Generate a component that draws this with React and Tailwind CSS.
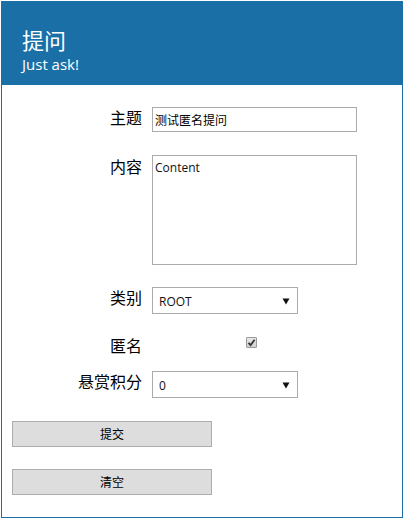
const cjk = { fontFamily: '"Noto Sans CJK SC", "Open Sans", sans-serif' };
const latin = { fontFamily: '"Open Sans", "Noto Sans CJK SC", sans-serif' };

function Label({ children, className = "" }) {
  return (
    <div className={"w-[140px] shrink-0 text-right text-[16px] leading-[18px] text-black " + className} style={cjk}>
      {children}
    </div>
  );
}

function Caret() {
  return (
    <svg width="8" height="8" viewBox="0 0 8 8" className="shrink-0">
      <path d="M0.5 1.5 L7.5 1.5 L4 7.5 Z" fill="#111" />
    </svg>
  );
}

function FakeSelect({ value }) {
  return (
    <div className="flex h-[27px] w-[146px] items-center justify-between border border-[#ababab] bg-white pl-[6px] pr-[7px]">
      <span className="pt-[2px] text-[12px] leading-[14px] text-[#111]" style={latin}>{value}</span>
      <Caret />
    </div>
  );
}

function App() {
  return (
    <div className="ml-px mt-px h-[517px] w-[402px] border border-[#1a70a6] bg-white">
      {/* Header */}
      <div className="h-[83px] bg-[#1a70a6] pl-[20px] pt-[24px] text-white">
        <div className="text-[22px] leading-[26px]" style={cjk}>提问</div>
        <div className="mt-[3px] text-[15px] leading-[18px]" style={latin}>Just ask!</div>
      </div>

      {/* Form */}
      <div className="pt-[22px]">
        <div className="flex items-start gap-[10px]">
          <Label className="pt-[1px]">主题</Label>
          <div className="flex h-[25px] w-[205px] items-center border border-[#ababab] px-[2px] text-[12px] text-black" style={cjk}>
            测试匿名提问
          </div>
        </div>

        <div className="mt-[23px] flex items-start gap-[10px]">
          <Label className="pt-[2px]">内容</Label>
          <div className="h-[110px] w-[205px] border border-[#ababab] px-[2px] pt-[5px] text-[12px] leading-[14px] text-[#111]" style={latin}>
            Content
          </div>
        </div>

        <div className="mt-[22px] flex items-start gap-[10px]">
          <Label className="pt-[1px]">类别</Label>
          <FakeSelect value="ROOT" />
        </div>

        <div className="mt-[22px] flex items-start gap-[10px]">
          <Label>匿名</Label>
          <div className="ml-[94px] mt-[1px] flex h-[11px] w-[11px] items-center justify-center rounded-[1px] border border-[#9a9a9a] bg-gradient-to-b from-[#e8e8e8] to-[#cfcfcf]">
            <svg width="9" height="9" viewBox="0 0 9 9">
              <path d="M1.5 4.8 L3.6 7 L7.6 1.8" fill="none" stroke="#333" strokeWidth="1.8" />
            </svg>
          </div>
        </div>

        <div className="mt-[17px] flex items-start gap-[10px]">
          <Label className="pt-[1px]">悬赏积分</Label>
          <FakeSelect value="0" />
        </div>

        <div className="ml-[10px] mt-[23px] flex flex-col gap-[22px]">
          <button className="h-[26px] w-[200px] border border-[#adadad] bg-[#dddddd] text-[12px] text-black" style={cjk}>
            提交
          </button>
          <button className="h-[26px] w-[200px] border border-[#adadad] bg-[#dddddd] text-[12px] text-black" style={cjk}>
            清空
          </button>
        </div>
      </div>
    </div>
  );
}

export default App;
